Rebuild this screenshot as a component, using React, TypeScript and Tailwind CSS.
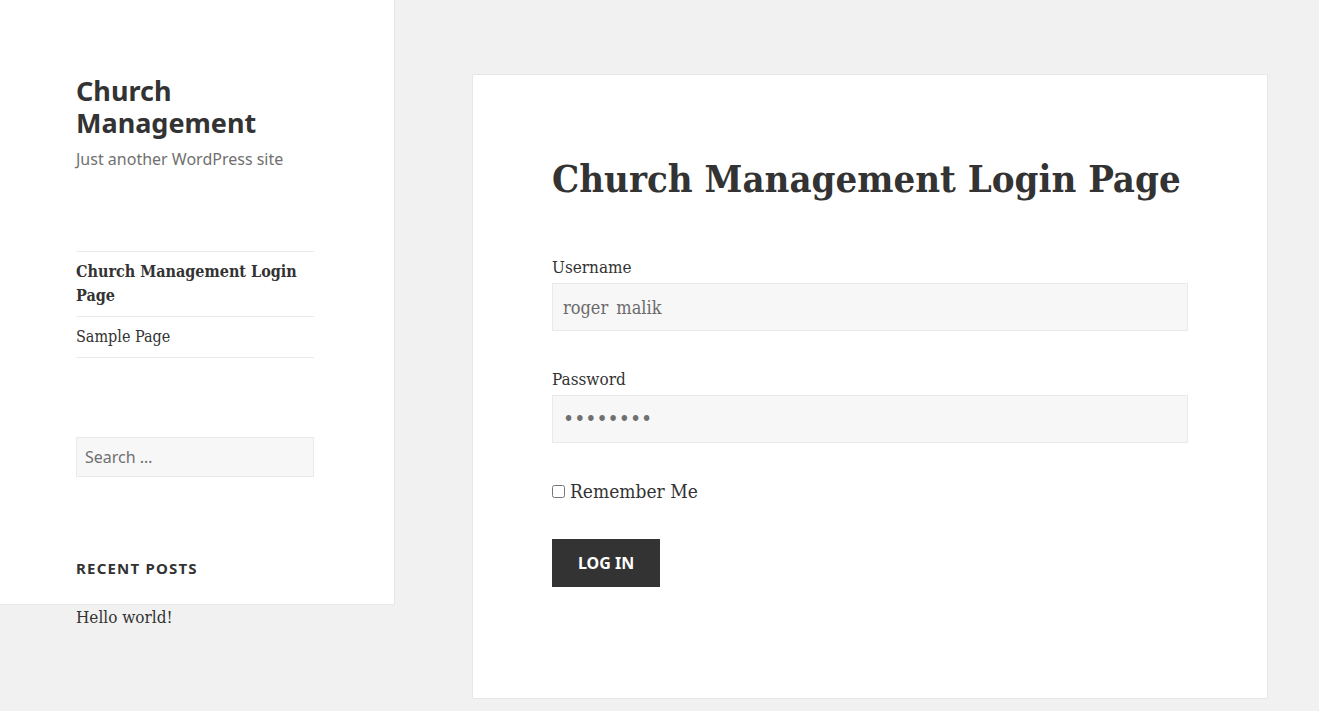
const serif = "font-['DejaVu_Serif_Condensed','DejaVu_Serif',serif]";
const sans = "font-['Noto_Sans',sans-serif]";

function Sidebar() {
    return (
        <aside className="relative h-[604px] w-[394px] shrink-0 bg-white shadow-[0_0_1px_rgba(0,0,0,0.25)]">
            <div className="px-[76px] pt-[75px]">
                <h1 className={`${sans} text-[27px] font-bold leading-[32px] text-[#333]`}>Church Management</h1>
                <p className={`${sans} mt-[8px] text-[16px] leading-[24px] text-[#707070]`}>Just another WordPress site</p>

                <nav className="mt-[80px] w-[238px] border-t border-[#eaeaea]">
                    <ul className={`${serif} text-[16px] text-[#333]`}>
                        <li className="border-b border-[#eaeaea] py-[8px] font-bold leading-[24px]">Church Management Login Page</li>
                        <li className="border-b border-[#eaeaea] py-[8px] leading-[24px]">Sample Page</li>
                    </ul>
                </nav>

                <div className="mt-[79px] w-[238px]">
                    <input
                        type="search"
                        placeholder="Search …"
                        className={`${sans} h-[40px] w-full border border-[#eaeaea] bg-[#f7f7f7] px-[8px] text-[16px] text-[#707070] placeholder:text-[#707070] outline-none`}
                    />
                </div>

                <h2 className={`${sans} mt-[80px] text-[15px] font-bold uppercase leading-[22px] tracking-[0.08em] text-[#333]`}>Recent Posts</h2>
                <p className={`${serif} mt-[26px] text-[17px] leading-[24px] text-[#333]`}>Hello world!</p>
            </div>
        </aside>
    );
}

function LoginCard() {
    return (
        <article className="w-[794px] bg-white px-[79px] pb-[111px] pt-[80px] shadow-[0_0_1px_rgba(0,0,0,0.25)]">
            <h1 className={`${serif} text-[38px] font-bold leading-[48px] text-[#333]`}>Church Management Login Page</h1>

            <form className={`${serif} mt-[52px] text-[#333]`}>
                <label className="block text-[17px] leading-[24px]">Username</label>
                <input
                    type="text"
                    defaultValue="roger_malik"
                    className={`${serif} mt-[4px] h-[48px] w-full border border-[#eaeaea] bg-[#f7f7f7] px-[10px] py-0 text-[18px] leading-[46px] text-[#6b6b6b] outline-none`}
                />

                <label className="mt-[36px] block text-[17px] leading-[24px]">Password</label>
                <input
                    type="password"
                    defaultValue="password"
                    className={`${serif} mt-[4px] h-[48px] w-full border border-[#eaeaea] bg-[#f7f7f7] px-[10px] py-0 text-[21px] leading-[46px] text-[#707070] outline-none`}
                />

                <label className="mt-[36px] flex items-center gap-[5px] text-[19px] leading-[24px]">
                    <input type="checkbox" className="h-[13px] w-[13px]" />
                    Remember Me
                </label>

                <button
                    type="button"
                    className={`${sans} mt-[36px] h-[48px] bg-[#333] px-[26px] text-[16px] font-bold uppercase text-white`}
                >
                    Log In
                </button>
            </form>
        </article>
    );
}

export default function App() {
    return (
        <div className="flex min-h-screen bg-[#f1f1f1]">
            <Sidebar />
            <main className="pl-[79px] pt-[75px]">
                <LoginCard />
            </main>
        </div>
    );
}
